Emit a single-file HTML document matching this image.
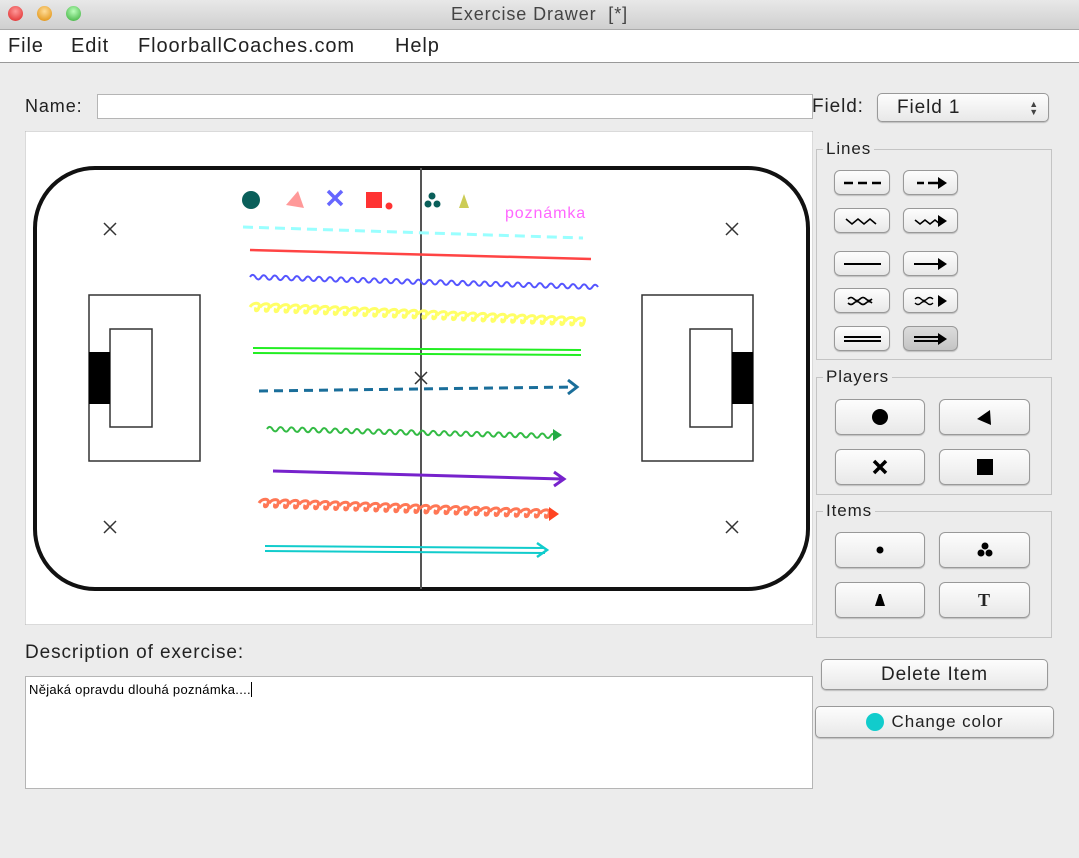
<!DOCTYPE html>
<html><head><meta charset="utf-8"><style>
*{margin:0;padding:0;box-sizing:border-box}
body{width:1079px;height:858px;background:#ececec;font-family:"Liberation Sans",sans-serif;position:relative;overflow:hidden;color:#222;letter-spacing:0.9px}
.abs{position:absolute}
.title{left:0;top:0;width:1079px;height:30px;background:linear-gradient(#e8e8e8,#cfcfcf);border-bottom:1px solid #aaa;text-align:center;font-size:18px;line-height:29px;color:#444}
.dot{width:15px;height:15px;border-radius:50%;top:6px}
.menu{left:0;top:30px;width:1079px;height:33px;background:#fff;border-bottom:1px solid #999;font-size:20px;line-height:33px}
.menu span{position:absolute}
.field{background:#fff;border:1px solid #b5b5b5}
.grp{border:1px solid #c4c4c4}
.grp .lg{position:absolute;top:-10px;left:6px;background:#ececec;padding:0 3px;font-size:17px;line-height:18px}
.btn{position:absolute;background:linear-gradient(#fdfdfd,#e8e8e8);border:1px solid #999;border-radius:6px;box-shadow:0 1px 1px rgba(0,0,0,.2);display:flex;align-items:center;justify-content:center}
</style></head><body>
<div class="abs title">Exercise Drawer&nbsp;&nbsp;[*]</div>
<div class="abs dot" style="left:8px;background:radial-gradient(circle at 50% 35%,#f99,#d22)"></div>
<div class="abs dot" style="left:37px;background:radial-gradient(circle at 50% 35%,#fd9,#d80)"></div>
<div class="abs dot" style="left:66px;background:radial-gradient(circle at 50% 35%,#bfb,#3a3)"></div>
<div class="abs menu"><span style="left:8px">File</span><span style="left:71px">Edit</span><span style="left:138px">FloorballCoaches.com</span><span style="left:395px">Help</span></div>

<div class="abs" style="left:25px;top:96px;font-size:18px">Name:</div>
<div class="abs field" style="left:97px;top:94px;width:716px;height:25px"></div>
<div class="abs" style="left:812px;top:96px;font-size:19px">Field:</div>
<div class="btn" style="left:877px;top:93px;width:172px;height:29px;justify-content:flex-start;padding-left:19px;font-size:19px;border-radius:5px">Field 1<span style="position:absolute;right:9px;font-size:9px;line-height:8px;color:#444">▲<br>▼</span></div>

<svg class="abs" style="left:25px;top:131px" width="788" height="494" viewBox="25 131 788 494">
<rect x="25" y="131" width="788" height="494" fill="#fff" stroke="#b5b5b5"/>
<rect x="35" y="168" width="773" height="421" rx="60" fill="none" stroke="#111" stroke-width="4"/>
<line x1="421" y1="168" x2="421" y2="589" stroke="#555" stroke-width="2"/>
<g fill="none" stroke="#333" stroke-width="1.5">
<rect x="89" y="295" width="111" height="166"/><rect x="110" y="329" width="42" height="98"/>
<rect x="642" y="295" width="111" height="166"/><rect x="690" y="329" width="42" height="98"/>
<path d="M104 223l12 12M116 223l-12 12M726 223l12 12M738 223l-12 12M104 521l12 12M116 521l-12 12M726 521l12 12M738 521l-12 12M415 372l12 12M427 372l-12 12"/>
</g>
<rect x="89" y="352" width="21" height="52" fill="#000"/><rect x="732" y="352" width="21" height="52" fill="#000"/>
<circle cx="251" cy="200" r="9" fill="#0a5f5a"/>
<path d="M286 205L298 191L304 208Z" fill="#f99"/>
<path d="M328 191l14 14M342 191l-14 14" stroke="#66f" stroke-width="3.5"/>
<rect x="366" y="192" width="16" height="16" fill="#f33"/><circle cx="389" cy="206" r="3.5" fill="#f33"/>
<circle cx="432" cy="196" r="3.5" fill="#0a5f5a"/><circle cx="428" cy="204" r="3.5" fill="#0a5f5a"/><circle cx="437" cy="204" r="3.5" fill="#0a5f5a"/>
<path d="M459 208L464 194L469 208Z" fill="#cc5"/>
<text x="505" y="218" font-family="Liberation Sans" font-size="16" fill="#f6f">poznámka</text>
<line x1="243" y1="227" x2="583" y2="238" stroke="#9ff" stroke-width="3" stroke-dasharray="10 6"/>
<line x1="250" y1="250" x2="591" y2="259" stroke="#f44" stroke-width="2.5"/>
<path id="w1" fill="none" stroke="#55f" stroke-width="2"/>
<path id="c1" fill="none" stroke="#ff6" stroke-width="3"/>
<line x1="253" y1="348" x2="581" y2="350" stroke="#2e2" stroke-width="2"/>
<line x1="253" y1="353" x2="581" y2="355" stroke="#2e2" stroke-width="2"/>
<line x1="259" y1="391" x2="574" y2="387" stroke="#1a6e9a" stroke-width="3" stroke-dasharray="9 6"/>
<path d="M568 380l9 7-9 7" fill="none" stroke="#1a6e9a" stroke-width="3"/>
<path id="w2" fill="none" stroke="#3b4" stroke-width="2"/>
<path d="M553 429l9 6-9 6z" fill="#2a4"/>
<line x1="273" y1="471" x2="562" y2="479" stroke="#72c" stroke-width="3"/>
<path d="M554 472l10 7-10 7" fill="none" stroke="#72c" stroke-width="3"/>
<path id="c2" fill="none" stroke="#f75" stroke-width="3"/>
<path d="M549 507l10 7-10 7z" fill="#f42"/>
<line x1="265" y1="546" x2="545" y2="548" stroke="#1cc" stroke-width="2"/>
<line x1="265" y1="551" x2="545" y2="553" stroke="#1cc" stroke-width="2"/>
<path d="M537 543l10 7-10 7" fill="none" stroke="#1cc" stroke-width="2.5"/>
</svg>
<script>
function wave(id,x1,y1,x2,y2,half,amp){var n=Math.round((x2-x1)/half),dx=(x2-x1)/n,dy=(y2-y1)/n,d="M"+x1+" "+y1;for(var i=0;i<n;i++){var s=(i%2?1:-1)*amp;d+=" Q"+(x1+dx*(i+.5))+" "+(y1+dy*(i+.5)+s*2)+" "+(x1+dx*(i+1))+" "+(y1+dy*(i+1));}document.getElementById(id).setAttribute("d",d);}
function chain(id,x1,y1,x2,y2,p,r){var n=Math.round((x2-x1)/p),dx=(x2-x1)/n,dy=(y2-y1)/n,d="";for(var i=0;i<n;i++){var x=x1+dx*i,y=y1+dy*i;d+="M"+x+" "+y+" C"+(x+p*.3)+" "+(y-r*2)+" "+(x+p*1.1)+" "+(y-r*2)+" "+(x+p*.9)+" "+(y)+" C"+(x+p*.8)+" "+(y+r*2)+" "+(x+p*.4)+" "+(y+r*2)+" "+(x+p*.6)+" "+(y+dy)+" ";}document.getElementById(id).setAttribute("d",d);}
wave("w1",250,277,598,287,5.5,2.2);wave("w2",267,429,556,436,5.5,2.2);
chain("c1",250,307,585,322,10,2.5);chain("c2",259,503,550,514,10,2.5);
</script>

<div class="abs" style="left:25px;top:642px;font-size:19px">Description of exercise:</div>
<div class="abs field" style="left:25px;top:676px;width:788px;height:113px;font-size:13px;padding:5px 0 0 3px;color:#000;letter-spacing:0.3px">Nějaká opravdu dlouhá poznámka....<span style="border-left:1px solid #000"></span></div>

<div class="abs grp" style="left:816px;top:149px;width:236px;height:211px"><span class="lg">Lines</span></div>
<div class="abs grp" style="left:816px;top:377px;width:236px;height:118px"><span class="lg">Players</span></div>
<div class="abs grp" style="left:816px;top:511px;width:236px;height:127px"><span class="lg">Items</span></div>

<div class="btn" style="left:834px;top:170px;width:56px;height:25px"><svg width="40" height="10"><path d="M2 5h9M16 5h9M30 5h9" stroke="#000" stroke-width="2.5"/></svg></div>
<div class="btn" style="left:903px;top:170px;width:55px;height:25px"><svg width="40" height="14"><path d="M6 7h7M17 7h12" stroke="#000" stroke-width="2.5"/><path d="M27 1l9 6-9 6z"/></svg></div>
<div class="btn" style="left:834px;top:208px;width:56px;height:25px"><svg width="40" height="12"><path d="M4 4l6 5 6-5 6 5 6-5 6 5" fill="none" stroke="#000" stroke-width="1.6"/></svg></div>
<div class="btn" style="left:903px;top:208px;width:55px;height:25px"><svg width="40" height="14"><path d="M4 6l5 4 5-4 5 4 5-4 5 4" fill="none" stroke="#000" stroke-width="1.6"/><path d="M27 1l9 6-9 6z"/></svg></div>
<div class="btn" style="left:834px;top:251px;width:56px;height:25px"><svg width="40" height="10"><path d="M2 5h37" stroke="#000" stroke-width="2"/></svg></div>
<div class="btn" style="left:903px;top:251px;width:55px;height:25px"><svg width="40" height="14"><path d="M3 7h27" stroke="#000" stroke-width="2"/><path d="M27 1l9 6-9 6z"/></svg></div>
<div class="btn" style="left:834px;top:288px;width:56px;height:25px"><svg width="40" height="12"><path d="M6 4q3-3 6 0t6 0t6 0t6 0M6 8q3 3 6 0t6 0t6 0t6 0" fill="none" stroke="#000" stroke-width="1.6"/></svg></div>
<div class="btn" style="left:903px;top:288px;width:55px;height:25px"><svg width="40" height="14"><path d="M4 5q3-3 6 0t6 0t6 0M4 9q3 3 6 0t6 0t6 0" fill="none" stroke="#000" stroke-width="1.4"/><path d="M27 1l9 6-9 6z"/></svg></div>
<div class="btn" style="left:834px;top:326px;width:56px;height:25px"><svg width="40" height="10"><path d="M2 3h37M2 7h37" stroke="#000" stroke-width="2"/></svg></div>
<div class="btn" style="left:903px;top:326px;width:55px;height:25px;background:linear-gradient(#dcdcdc,#c4c4c4)"><svg width="40" height="14"><path d="M3 5h27M3 9h27" stroke="#000" stroke-width="2"/><path d="M27 1l9 6-9 6z"/></svg></div>

<div class="btn" style="left:835px;top:399px;width:90px;height:36px"><svg width="20" height="20"><circle cx="10" cy="10" r="8"/></svg></div>
<div class="btn" style="left:939px;top:399px;width:91px;height:36px"><svg width="20" height="20"><path d="M2 12L15 3L16 18Z"/></svg></div>
<div class="btn" style="left:835px;top:449px;width:90px;height:36px"><svg width="20" height="20"><path d="M4 4l12 12M16 4L4 16" stroke="#000" stroke-width="3.5"/></svg></div>
<div class="btn" style="left:939px;top:449px;width:91px;height:36px"><svg width="20" height="20"><rect x="2" y="2" width="16" height="16"/></svg></div>
<div class="btn" style="left:835px;top:532px;width:90px;height:36px"><svg width="10" height="10"><circle cx="5" cy="5" r="3.5"/></svg></div>
<div class="btn" style="left:939px;top:532px;width:91px;height:36px"><svg width="20" height="20"><circle cx="10" cy="6" r="3.5"/><circle cx="6" cy="13" r="3.5"/><circle cx="14" cy="13" r="3.5"/></svg></div>
<div class="btn" style="left:835px;top:582px;width:90px;height:36px"><svg width="12" height="14"><path d="M1 13L5 1h2l4 12z"/></svg></div>
<div class="btn" style="left:939px;top:582px;width:91px;height:36px;font-family:'Liberation Serif',serif;font-weight:bold;font-size:18px">T</div>

<div class="btn" style="left:821px;top:659px;width:227px;height:31px;font-size:19px;border-radius:5px">Delete Item</div>
<div class="btn" style="left:815px;top:706px;width:239px;height:32px;font-size:17px;border-radius:5px"><span style="display:inline-block;width:18px;height:18px;border-radius:50%;background:#1cc;margin-right:8px"></span>Change color</div>
</body></html>
